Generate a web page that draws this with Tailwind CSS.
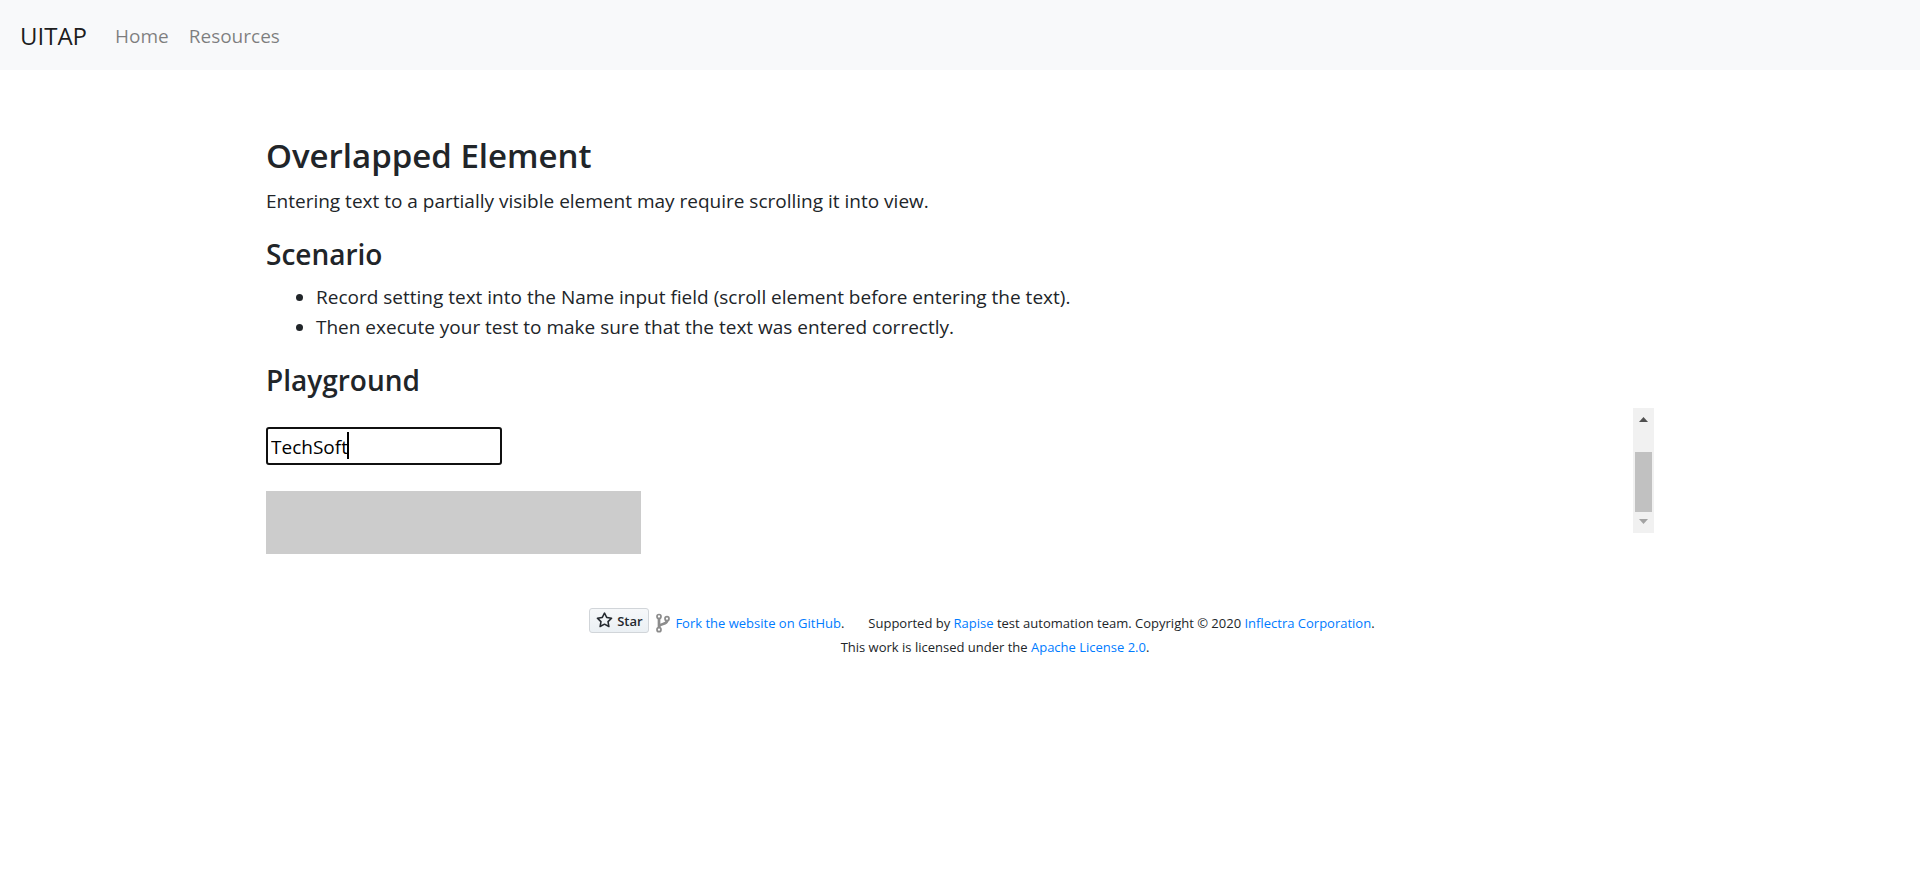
<!DOCTYPE html>
<html lang="en">
<head>
<meta charset="utf-8">
<title>Overlapped Element</title>
<script src="https://cdn.jsdelivr.net/npm/@tailwindcss/browser@4"></script>
</head>
<body class="bg-white font-['Open_Sans','Noto_Sans',sans-serif] text-[19px] leading-[30px] text-[#212529]">
<nav class="flex h-[70px] items-center bg-[#f8f9fa] px-5 pt-[2px]">
  <a href="#" class="mr-7 text-2xl text-black/90">UITAP</a>
  <ul class="flex gap-5 text-black/50">
    <li><a href="#">Home</a></li>
    <li><a href="#">Resources</a></li>
  </ul>
</nav>
<main class="mx-auto max-w-[1388px] pt-[65px]">
  <h3 class="mb-[9px] text-[33px] leading-[42px] font-semibold">Overlapped Element</h3>
  <p class="mb-5">Entering text to a partially visible element may require scrolling it into view.</p>
  <h4 class="mb-[10px] text-[28px] leading-9 font-semibold">Scenario</h4>
  <ul class="mb-5 list-disc pl-[50px]">
    <li>Record setting text into the Name input field (scroll element before entering the text).</li>
    <li>Then execute your test to make sure that the text was entered correctly.</li>
  </ul>
  <h4 class="mb-[10px] text-[28px] leading-9 font-semibold">Playground</h4>
  <div class="flex items-start justify-between">
    <div class="pt-[19px]">
      <div class="relative w-[236px]">
        <input type="text" aria-label="Name" value="TechSoft" class="block h-[38px] w-full rounded-[3px] border-2 border-[#101010] bg-white px-[3px] pt-[2px] text-black outline-none">
        <span class="absolute top-[5px] left-[81px] h-[27px] w-[2px] bg-black"></span>
      </div>
      <div class="mt-[26px] h-[63px] w-[375px] bg-[#ccc]"></div>
    </div>
    <div class="flex h-[125px] w-[21px] flex-col items-center bg-[#f1f1f1] pt-[9px] pb-[9px]" aria-hidden="true">
      <svg class="h-[5px] w-[9px]" viewBox="0 0 9 5" fill="#505050"><path d="M4.500 0 9 5H0z"/></svg>
      <div class="mt-[30px] h-[60px] w-[17px] bg-[#c1c1c1]"></div>
      <svg class="mt-[7px] h-[5px] w-[9px]" viewBox="0 0 9 5" fill="#a3a3a3"><path d="M0 0h9L4.500 5z"/></svg>
    </div>
  </div>
</main>
<footer class="mt-[54px] text-[13px] leading-6">
  <div class="flex items-start justify-center pl-[44px]">
    <button type="button" class="flex h-[25px] w-[60px] items-center justify-center gap-1 rounded-[3px] border border-[#d1d5d9] bg-linear-to-b from-[#f6f8fa] to-[#ebf0f4] text-[13px] font-semibold text-[#24292f]">
      <svg class="size-[17px]" viewBox="0 0 16 16" fill="currentColor"><path d="M8 .25a.75.75 0 0 1 .673.418l1.882 3.815 4.210.612a.75.75 0 0 1 .416 1.279l-3.046 2.970.719 4.192a.75.75 0 0 1-1.088.791L8 12.347l-3.766 1.980a.75.75 0 0 1-1.088-.79l.720-4.194L.818 6.374a.75.75 0 0 1 .416-1.280l4.210-.611L7.327.668A.75.75 0 0 1 8 .25zm0 2.445L6.615 5.500a.75.75 0 0 1-.564.410l-3.097.450 2.240 2.184a.75.75 0 0 1 .216.664l-.528 3.084 2.769-1.456a.75.75 0 0 1 .698 0l2.770 1.456-.530-3.084a.75.75 0 0 1 .216-.664l2.240-2.183-3.096-.450a.75.75 0 0 1-.564-.410L8 2.694z"/></svg>
      Star
    </button>
    <div class="flex items-center pt-[3px]">
      <svg class="ml-[7px] h-5 w-[14px]" viewBox="0 0 14 20" fill="none" stroke="#8c8c8c"><g stroke-width="1.700"><circle cx="3" cy="3.500" r="2"/><circle cx="3" cy="16.700" r="2"/><circle cx="11" cy="5.700" r="2"/></g><path stroke-width="2.700" d="M3 5.500v9.200M11 7.700c0 4.300-7 2.300-8 6"/></svg>
      <span class="ml-[5px]"><a href="#" class="text-[#007bff]">Fork the website on GitHub</a>.</span>
      <span class="ml-6">Supported by <a href="#" class="text-[#007bff]">Rapise</a> test automation team. Copyright © 2020 <a href="#" class="text-[#007bff]">Inflectra Corporation</a>.</span>
    </div>
  </div>
  <p class="pl-[70px] text-center">This work is licensed under the <a href="#" class="text-[#007bff]">Apache License 2.0</a>.</p>
</footer>
</body>
</html>
